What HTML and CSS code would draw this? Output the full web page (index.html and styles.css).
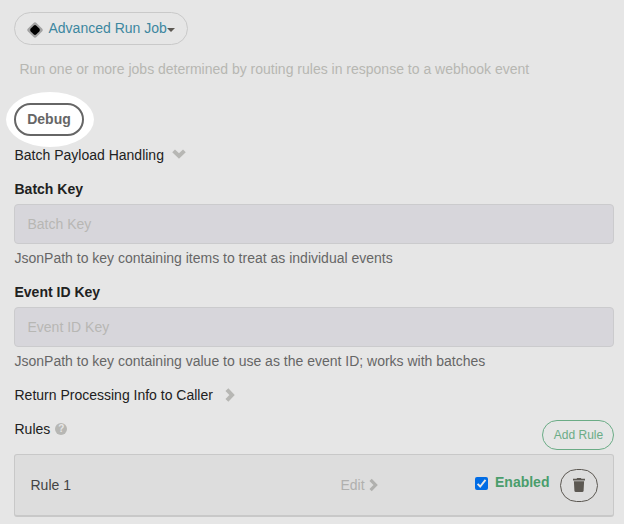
FILE: index.html
```html
<!DOCTYPE html>
<html lang="en">
<head>
<meta charset="utf-8">
<title>Webhook Handler</title>
<link rel="stylesheet" href="styles.css">
</head>
<body>
<main class="config">
  <button class="plugin-select">
    <svg class="plugin-icon" width="16" height="16" viewBox="0 0 16 16"><rect x="2" y="2" width="12" height="12" rx="2" transform="rotate(45 8 8)" fill="#a3a3a3"/><rect x="4" y="4" width="8" height="8" rx="2" transform="rotate(45 8 8)" fill="#000"/></svg>
    <span>Advanced Run Job</span>
    <i class="caret"></i>
  </button>
  <p class="description">Run one or more jobs determined by routing rules in response to a webhook event</p>
  <div class="spotlight"><button class="debug">Debug</button></div>
  <div class="section batch">Batch Payload Handling
    <svg class="chev-down" width="14" height="10" viewBox="0 0 14 10"><path d="M1.6 1.9 7 7l5.4-5.1" fill="none" stroke="#b7b7b4" stroke-width="4"/></svg>
  </div>
  <div class="field">
    <label for="batch">Batch Key</label>
    <input id="batch" type="text" placeholder="Batch Key">
    <p>JsonPath to key containing items to treat as individual events</p>
  </div>
  <div class="field">
    <label for="event">Event ID Key</label>
    <input id="event" type="text" placeholder="Event ID Key">
    <p>JsonPath to key containing value to use as the event ID; works with batches</p>
  </div>
  <div class="section return">Return Processing Info to Caller
    <svg class="chev-right" width="10" height="14" viewBox="0 0 10 14"><path d="M1.9 1.6 7 7l-5.1 5.4" fill="none" stroke="#b7b7b4" stroke-width="4"/></svg>
  </div>
  <div class="rules-head">
    <div class="rules-title">Rules <span class="help">?</span></div>
    <button class="add">Add Rule</button>
  </div>
  <div class="rule">
    <span class="rule-name">Rule 1</span>
    <span class="edit">Edit
      <svg width="9" height="14" viewBox="0 0 9 14"><path d="M1.6 1.8 6.6 7l-5 5.2" fill="none" stroke="#b0b0ae" stroke-width="3.2"/></svg>
    </span>
    <span class="enabled">
      <svg width="13" height="13" viewBox="0 0 13 13"><rect width="13" height="13" rx="2" fill="#006ce5"/><path d="m2.6 6.8 2.6 2.7 5.3-6.6" fill="none" stroke="#e6e6e6" stroke-width="1.9"/></svg>
      <b>Enabled</b>
    </span>
    <button class="trash" aria-label="Delete">
      <svg width="12" height="14" viewBox="0 0 12 14"><path d="M0 .8h3.5L4.2 0h3.6l.7.8H12v1.8H0zM.9 3.3h10.2l-.5 9.4q-.1 1.3-1.4 1.3H2.8q-1.3 0-1.4-1.3z" fill="#5c5852"/></svg>
    </button>
  </div>
</main>
</body>
</html>
```
FILE: styles.css
```css
* { box-sizing: border-box; }
body {
  margin: 0;
  background: #e6e6e6;
  color: #212121;
  font: 14px/20px "Liberation Sans", Arial, sans-serif;
}
button { font: inherit; background: transparent; margin: 0; padding: 0; }
p { margin: 0; }
svg { display: block; flex: none; }
.config { padding: 12px 10px 0 14px; }
.plugin-select {
  display: flex;
  align-items: center;
  width: 174px;
  height: 33px;
  padding-left: 12px;
  border: 1px solid #c9c9c9;
  border-radius: 17px;
  color: #3c87a0;
  white-space: nowrap;
}
.plugin-icon { margin: 3px 5.5px 0 0; }
.plugin-select span { margin-top: -1px; }
.caret {
  margin-top: 2px;
  border: 4px solid transparent;
  border-top-color: #5c5852;
  border-bottom: 0;
}
.description { margin: 14px 0 0 5.5px; color: #b7b7b2; }
.spotlight {
  display: flex;
  align-items: center;
  width: 88px;
  height: 55px;
  margin: 13px 0 0 -8px;
  padding-left: 8px;
  border-radius: 50%;
  background: #fff;
}
.debug {
  width: 70px;
  height: 33px;
  margin-bottom: 1px;
  border: 2px solid #666;
  border-radius: 17px;
  color: #666;
  font-weight: bold;
}
.section { display: flex; align-items: center; padding-left: .5px; }
.batch { margin-top: -2px; }
.chev-down { margin: -2px 0 0 8.5px; }
.field { margin-top: 14px; }
.field label { display: block; padding-left: .5px; font-weight: bold; }
.field input {
  display: block;
  width: 100%;
  height: 40px;
  margin: 5px 0 4px;
  padding: 0 12.5px;
  border: 1px solid #cbcbcd;
  border-radius: 4px;
  background: #d7d6db;
  font: inherit;
}
.field input::placeholder { color: #b7b7b4; opacity: 1; }
.field p { padding-left: .5px; color: #666; }
.return { margin-top: 14px; }
.chev-right { margin-left: 12px; }
.rules-head {
  display: flex;
  justify-content: space-between;
  align-items: flex-start;
  margin-top: 15px;
}
.rules-title { display: flex; align-items: center; margin-top: -1px; padding-left: .5px; }
.help {
  width: 12px;
  height: 12px;
  margin-left: 5px;
  border-radius: 50%;
  background: #b7b7b4;
  color: #e6e6e6;
  font-size: 10px;
  font-weight: bold;
  line-height: 12px;
  text-align: center;
}
.add {
  width: 72px;
  height: 30px;
  padding-left: 1px;
  border: 1px solid #6bac86;
  border-radius: 15px;
  color: #6bac86;
  font-size: 12px;
}
.rule {
  display: flex;
  align-items: center;
  height: 63px;
  margin-top: 4px;
  padding: 0 15px;
  border: 1px solid #c8c8c8;
  border-bottom-width: 2px;
  border-radius: 3px;
  background: #ddd;
  color: #444;
}
.rule-name { width: 310px; padding-left: .5px; }
.edit { display: flex; align-items: center; gap: 4px; width: 135px; padding-left: .5px; color: #b0b0ae; }
.enabled { display: flex; align-items: center; gap: 7px; width: 85px; color: #4a9d6c; }
.enabled svg { margin-top: -3px; }
.enabled b { margin-top: -6px; }
.trash {
  display: flex;
  align-items: center;
  justify-content: center;
  width: 38px;
  height: 33px;
  border: 1px solid #5c5852;
  border-radius: 17px;
}
```
